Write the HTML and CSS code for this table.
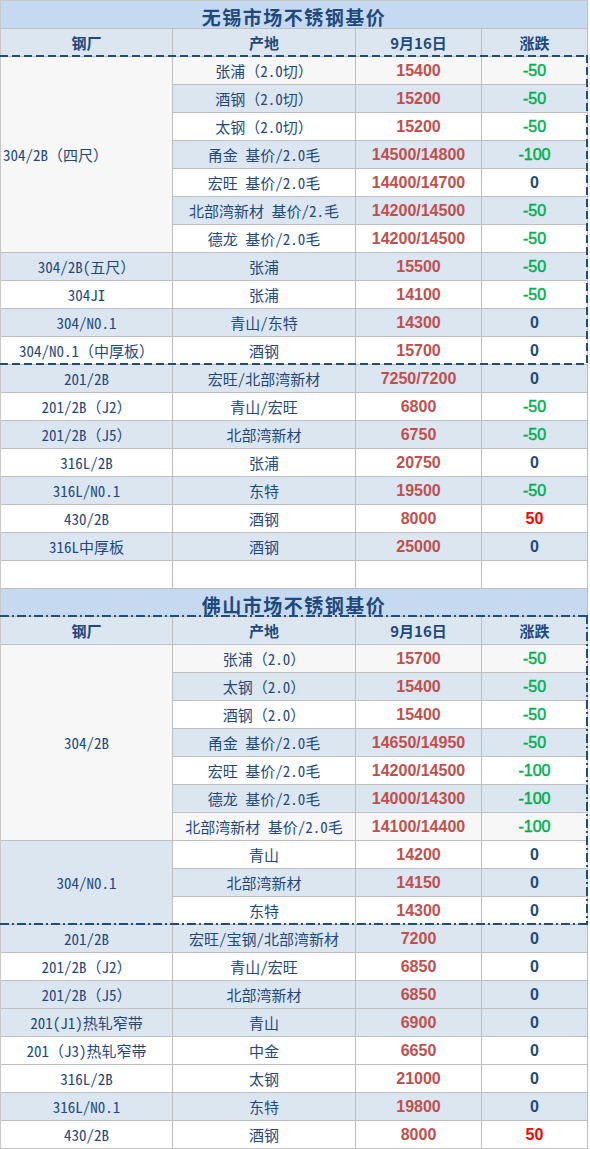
FILE: index.html
```html
<!DOCTYPE html>
<html lang="zh-CN">
<head>
<meta charset="utf-8">
<title>不锈钢基价</title>
<link rel="stylesheet" href="styles.css">
</head>
<body>
<div class="sheet">
  <div class="title">无锡市场不锈钢基价</div>
  <div class="grid">
    <div class="row b head"><div>钢厂</div><div>产地</div><div>9月16日</div><div>涨跌</div></div>
  </div>
  <div class="grid box dash">
    <div class="merge7 g left">304/2B（四尺）</div>
    <div class="row g"><div>张浦（2.0切）</div><div class="p">15400</div><div class="dn">-50</div></div>
    <div class="row b"><div>酒钢（2.0切）</div><div class="p">15200</div><div class="dn">-50</div></div>
    <div class="row w"><div>太钢（2.0切）</div><div class="p">15200</div><div class="dn">-50</div></div>
    <div class="row b"><div>甬金 基价/2.0毛</div><div class="p">14500/14800</div><div class="dn">-100</div></div>
    <div class="row w"><div>宏旺 基价/2.0毛</div><div class="p">14400/14700</div><div class="z">0</div></div>
    <div class="row b"><div>北部湾新材 基价/2.毛</div><div class="p">14200/14500</div><div class="dn">-50</div></div>
    <div class="row w"><div>德龙 基价/2.0毛</div><div class="p">14200/14500</div><div class="dn">-50</div></div>
    <div class="row b"><div>304/2B(五尺）</div><div>张浦</div><div class="p">15500</div><div class="dn">-50</div></div>
    <div class="row w"><div>304JI</div><div>张浦</div><div class="p">14100</div><div class="dn">-50</div></div>
    <div class="row b"><div>304/N0.1</div><div>青山/东特</div><div class="p">14300</div><div class="z">0</div></div>
    <div class="row w"><div>304/N0.1（中厚板）</div><div>酒钢</div><div class="p">15700</div><div class="z">0</div></div>
  </div>
  <div class="grid">
    <div class="row b"><div>201/2B</div><div>宏旺/北部湾新材</div><div class="p">7250/7200</div><div class="z">0</div></div>
    <div class="row w"><div>201/2B（J2）</div><div>青山/宏旺</div><div class="p">6800</div><div class="dn">-50</div></div>
    <div class="row b"><div>201/2B（J5）</div><div>北部湾新材</div><div class="p">6750</div><div class="dn">-50</div></div>
    <div class="row w"><div>316L/2B</div><div>张浦</div><div class="p">20750</div><div class="z">0</div></div>
    <div class="row b"><div>316L/N0.1</div><div>东特</div><div class="p">19500</div><div class="dn">-50</div></div>
    <div class="row w"><div>430/2B</div><div>酒钢</div><div class="p">8000</div><div class="up">50</div></div>
    <div class="row b"><div>316L中厚板</div><div>酒钢</div><div class="p">25000</div><div class="z">0</div></div>
    <div class="row w"><div></div><div></div><div></div><div></div></div>
  </div>

  <div class="title">佛山市场不锈钢基价</div>
  <div class="grid box dashdot">
    <div class="row b head"><div>钢厂</div><div>产地</div><div>9月16日</div><div>涨跌</div></div>
    <div class="merge7 g">304/2B</div>
    <div class="row g"><div>张浦（2.0）</div><div class="p">15700</div><div class="dn">-50</div></div>
    <div class="row b"><div>太钢（2.0）</div><div class="p">15400</div><div class="dn">-50</div></div>
    <div class="row w"><div>酒钢（2.0）</div><div class="p">15400</div><div class="dn">-50</div></div>
    <div class="row b"><div>甬金 基价/2.0毛</div><div class="p">14650/14950</div><div class="dn">-50</div></div>
    <div class="row w"><div>宏旺 基价/2.0毛</div><div class="p">14200/14500</div><div class="dn">-100</div></div>
    <div class="row b"><div>德龙 基价/2.0毛</div><div class="p">14000/14300</div><div class="dn">-100</div></div>
    <div class="row g"><div>北部湾新材 基价/2.0毛</div><div class="p">14100/14400</div><div class="dn">-100</div></div>
    <div class="merge3 b">304/N0.1</div>
    <div class="row w"><div>青山</div><div class="p">14200</div><div class="z">0</div></div>
    <div class="row b"><div>北部湾新材</div><div class="p">14150</div><div class="z">0</div></div>
    <div class="row w"><div>东特</div><div class="p">14300</div><div class="z">0</div></div>
  </div>
  <div class="grid">
    <div class="row b"><div>201/2B</div><div>宏旺/宝钢/北部湾新材</div><div class="p">7200</div><div class="z">0</div></div>
    <div class="row w"><div>201/2B（J2）</div><div>青山/宏旺</div><div class="p">6850</div><div class="z">0</div></div>
    <div class="row b"><div>201/2B（J5）</div><div>北部湾新材</div><div class="p">6850</div><div class="z">0</div></div>
    <div class="row b"><div>201(J1)热轧窄带</div><div>青山</div><div class="p">6900</div><div class="z">0</div></div>
    <div class="row w"><div>201（J3)热轧窄带</div><div>中金</div><div class="p">6650</div><div class="z">0</div></div>
    <div class="row w"><div>316L/2B</div><div>太钢</div><div class="p">21000</div><div class="z">0</div></div>
    <div class="row b"><div>316L/N0.1</div><div>东特</div><div class="p">19800</div><div class="z">0</div></div>
    <div class="row w"><div>430/2B</div><div>酒钢</div><div class="p">8000</div><div class="up">50</div></div>
  </div>
</div>
</body>
</html>
```

FILE: styles.css
```css
* { box-sizing: border-box; }

html, body {
  margin: 0;
  padding: 0;
  background: #ffffff;
}

.sheet {
  width: 588px;
  border-top: 1px solid #c8c8c8;
  border-left: 1px solid #c8c8c8;
  font-family: "Noto Sans Mono CJK SC", "Noto Sans CJK SC", sans-serif;
  font-size: 15px;
  color: #1f497d;
}

.title {
  height: 28px;
  background: #c5d9f1;
  border-right: 1px solid #bfbfbf;
  border-bottom: 1px solid #bfbfbf;
  display: flex;
  align-items: center;
  justify-content: center;
  font-family: "Noto Sans CJK SC", sans-serif;
  font-weight: 700;
  font-size: 19px;
  letter-spacing: 1.5px;
  line-height: 1;
  padding-top: 3px;
}

.grid {
  display: grid;
  grid-template-columns: 172px 183px 126px 106px;
  grid-auto-rows: 28px;
}

.row { display: contents; }

.grid .row > div,
.merge7,
.merge3 {
  border-right: 1px solid #bfbfbf;
  border-bottom: 1px solid #bfbfbf;
  display: flex;
  align-items: center;
  justify-content: center;
  white-space: nowrap;
  line-height: 1;
  overflow: hidden;
}

.merge7 { grid-row: span 7; }
.merge3 { grid-row: span 3; }
.left { justify-content: flex-start !important; padding-left: 2px; }

.row.w > div { background: #ffffff; }
.row.b > div, .merge3.b { background: #dce6f1; }
.row.g > div, .merge7.g { background: #f7f7f7; }

.head > div {
  font-family: "Noto Sans CJK SC", sans-serif;
  font-weight: 700;
  font-size: 15px;
}

.p, .dn, .z, .up {
  font-family: "Liberation Sans", Arial, sans-serif;
  font-weight: 700;
  font-size: 16px;
}
.p { color: #c0504d; }
.dn { color: #00b050; font-weight: 400; -webkit-text-stroke: 0.5px #00b050; }
.z { color: #1f497d; }
.up { color: #ff0000; }

.box { position: relative; }
.box::after {
  content: "";
  position: absolute;
  left: -1px;
  right: 0;
  top: -2px;
  bottom: 0;
  pointer-events: none;
}
.dash::after {
  background:
    repeating-linear-gradient(90deg, #1f4e79 0 8px, transparent 8px 12px) left top / 100% 2px no-repeat,
    repeating-linear-gradient(90deg, #1f4e79 0 8px, transparent 8px 12px) left bottom / 100% 2px no-repeat,
    repeating-linear-gradient(180deg, #1f4e79 0 8px, transparent 8px 12px) right top / 2px 100% no-repeat;
}
.dashdot::after {
  background:
    repeating-linear-gradient(90deg, #1f4e79 0 9px, transparent 9px 12px, #1f4e79 12px 14px, transparent 14px 17px) left top / 100% 2px no-repeat,
    repeating-linear-gradient(90deg, #1f4e79 0 9px, transparent 9px 12px, #1f4e79 12px 14px, transparent 14px 17px) left bottom / 100% 2px no-repeat,
    repeating-linear-gradient(180deg, #1f4e79 0 9px, transparent 9px 12px, #1f4e79 12px 14px, transparent 14px 17px) right top / 2px 100% no-repeat;
}
```
